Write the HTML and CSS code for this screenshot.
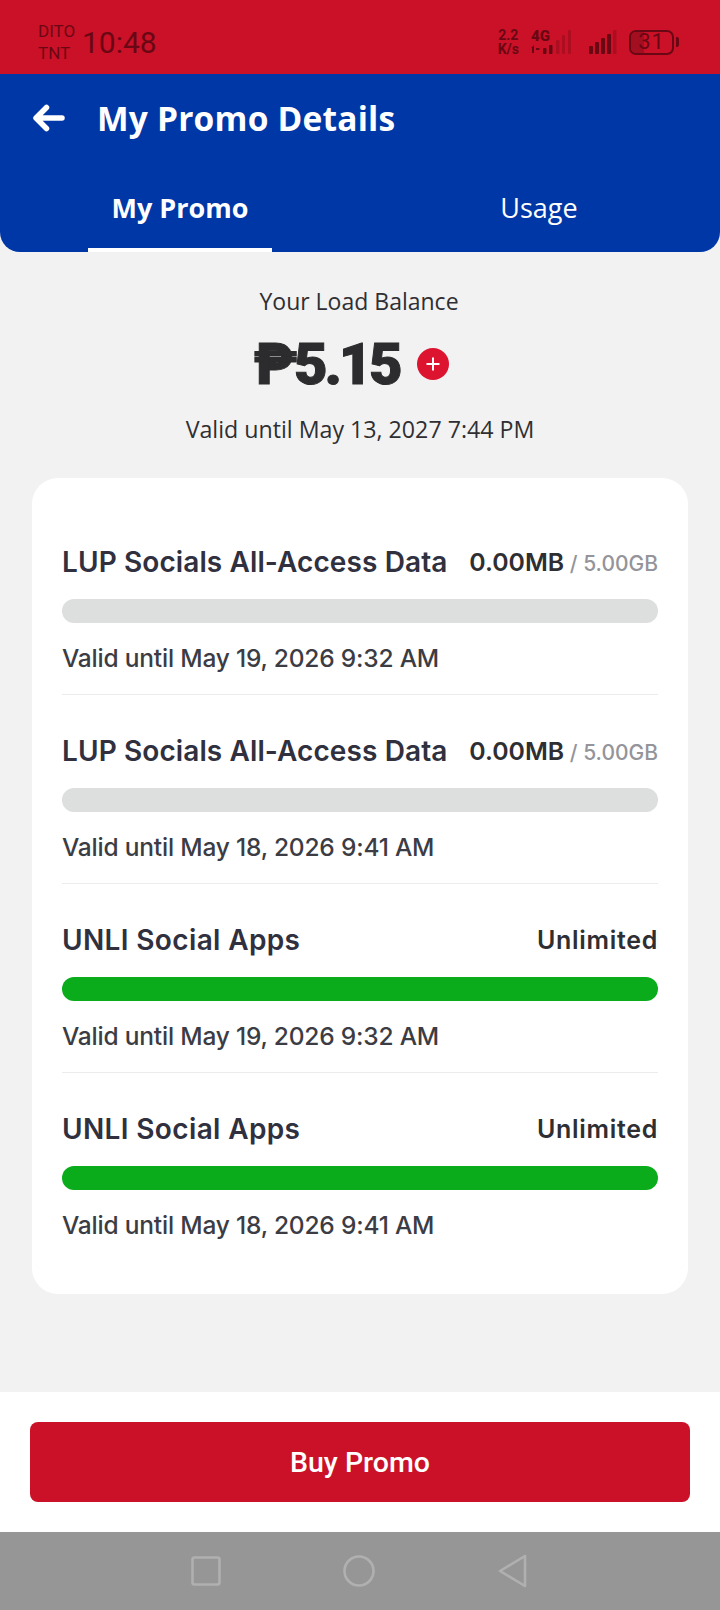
FILE: index.html
```html
<!DOCTYPE html>
<html lang="en">
<head>
<meta charset="utf-8">
<title>My Promo Details</title>
<link rel="stylesheet" href="styles.css">
</head>
<body>
<div class="screen">
  <div class="status">
    <div class="carrier"><span>DITO</span><span>TNT</span></div>
    <div class="clock">10:48</div>
    <div class="status-right">
      <div class="speed"><span>2.2</span><span>K/s</span></div>
      <div class="net">
        <span class="net-label">4G</span>
        <svg class="sig1" width="42" height="14" viewBox="0 0 42 14"><g fill="#6a0714"><path d="M0 8l3-3v8H1V8zM5 8h3l1 1-1 1H5z"/><rect x="12" y="8" width="3.5" height="6" rx="1"/><rect x="18" y="5" width="3.5" height="9" rx="1"/></g></svg>
        <svg class="sig1b" width="18" height="24" viewBox="0 0 18 24"><g fill="#6a0714" opacity=".3"><rect x="1" y="10" width="3.5" height="14" rx="1"/><rect x="7" y="5" width="3" height="19" rx="1"/><rect x="13" y="0" width="3" height="24" rx="1"/></g></svg>
      </div>
      <svg class="sig2" width="28" height="24" viewBox="0 0 28 24"><g fill="#6a0714"><rect x="0" y="16" width="4" height="8" rx="1"/><rect x="6" y="12" width="4" height="12" rx="1"/><rect x="12" y="8" width="4" height="16" rx="1"/><rect x="18" y="4" width="4" height="20" rx="1"/></g><rect x="24" y="0" width="3.5" height="24" rx="1" fill="#6a0714" opacity=".3"/></svg>
      <div class="battery"><div class="batt-body"><span class="batt-fill"></span><span class="batt-num">31</span></div><span class="batt-tip"></span></div>
    </div>
  </div>
  <header class="header">
    <div class="title-row">
      <svg class="back" width="32" height="28" viewBox="0 0 32 28"><path d="M13.5 3.5L3 14l10.5 10.5M4 14h25" fill="none" stroke="#fff" stroke-width="5.5" stroke-linecap="round" stroke-linejoin="round"/></svg>
      <h1>My Promo Details</h1>
    </div>
    <nav class="tabs">
      <div class="tab active">My Promo</div>
      <div class="tab">Usage</div>
    </nav>
  </header>
  <main class="content">
    <section class="balance">
      <div class="bal-label">Your Load Balance</div>
      <div class="bal-row">
        <span class="amount">₱5.15</span>
        <svg class="plus" width="32" height="32" viewBox="0 0 32 32"><circle cx="16" cy="16" r="16" fill="#dc1430"/><path d="M16 9.5v13M9.5 16h13" stroke="#fff" stroke-width="2"/></svg>
      </div>
      <div class="bal-valid">Valid until May 13, 2027 7:44 PM</div>
    </section>
    <section class="card">
      <article class="item">
        <div class="item-head"><span class="name">LUP Socials All-Access Data</span><span class="qty">0.00MB<small> / 5.00GB</small></span></div>
        <div class="bar"></div>
        <div class="until">Valid until May 19, 2026 9:32 AM</div>
      </article>
      <article class="item">
        <div class="item-head"><span class="name">LUP Socials All-Access Data</span><span class="qty">0.00MB<small> / 5.00GB</small></span></div>
        <div class="bar"></div>
        <div class="until">Valid until May 18, 2026 9:41 AM</div>
      </article>
      <article class="item">
        <div class="item-head"><span class="name unli">UNLI Social Apps</span><span class="qty unl">Unlimited</span></div>
        <div class="bar full"></div>
        <div class="until">Valid until May 19, 2026 9:32 AM</div>
      </article>
      <article class="item">
        <div class="item-head"><span class="name unli">UNLI Social Apps</span><span class="qty unl">Unlimited</span></div>
        <div class="bar full"></div>
        <div class="until">Valid until May 18, 2026 9:41 AM</div>
      </article>
    </section>
  </main>
  <div class="footer"><button class="buy">Buy Promo</button></div>
  <div class="navbar">
    <svg width="30" height="30" viewBox="0 0 30 30"><rect x="1.5" y="1.5" width="27" height="27" rx="2" fill="none" stroke="#b0b0b0" stroke-width="2.6"/></svg>
    <svg width="32" height="32" viewBox="0 0 32 32"><circle cx="16" cy="16" r="14.5" fill="none" stroke="#b0b0b0" stroke-width="2.6"/></svg>
    <svg width="29" height="34" viewBox="0 0 29 34"><path d="M27 2v30L2 17z" fill="none" stroke="#b0b0b0" stroke-width="2.6" stroke-linejoin="round"/></svg>
  </div>
</div>
</body>
</html>
```

FILE: styles.css
```css
* { box-sizing: border-box; margin: 0; padding: 0; }
html, body { width: 720px; height: 1610px; overflow: hidden; }
body { background: #f2f2f2; font-family: "Open Sans", "Noto Sans", sans-serif; color: #2f2f33; }
.screen { width: 720px; height: 1610px; display: flex; flex-direction: column; }

.status { height: 74px; flex: none; background: #cb1127; display: flex; align-items: center; color: #6a0714; padding: 10px 41px 0 38px; }
.carrier { display: flex; flex-direction: column; font-family: "Roboto", sans-serif; font-size: 17px; line-height: 22px; width: 44px; }
.clock { font-family: "Roboto", sans-serif; font-size: 30px; }
.status-right { margin-left: auto; display: flex; align-items: center; }
.speed { display: flex; flex-direction: column; align-items: center; font-family: "Roboto", sans-serif; font-weight: 700; font-size: 14px; line-height: 14px; margin-right: 12px; }
.net { position: relative; width: 42px; height: 24px; margin-right: 16px; }
.net-label { position: absolute; left: 0; top: -1px; font-family: "Roboto", sans-serif; font-weight: 900; font-size: 15px; line-height: 14px; }
.sig1 { position: absolute; left: 0; bottom: 0; }
.sig1b { position: absolute; right: 0; bottom: 0; }
.sig2 { margin-right: 12px; }
.battery { display: flex; align-items: center; }
.batt-body { position: relative; width: 45px; height: 25px; border: 2.5px solid #6a0714; border-radius: 7px; display: flex; align-items: center; justify-content: center; overflow: hidden; }
.batt-fill { position: absolute; left: 0; top: 0; bottom: 0; width: 31%; background: #a30f20; }
.batt-num { position: relative; font-family: "Roboto", sans-serif; font-size: 22px; line-height: 20px; letter-spacing: 1px; }
.batt-tip { width: 3px; height: 10px; background: #6a0714; border-radius: 0 2px 2px 0; margin-left: 2px; }

.header { height: 178px; flex: none; background: #0037a6; border-radius: 0 0 20px 20px; display: flex; flex-direction: column; color: #fff; }
.title-row { height: 88px; display: flex; align-items: center; padding-left: 33px; }
.back { margin-right: 32px; }
h1 { font-size: 33.5px; font-weight: 700; line-height: 40px; letter-spacing: 0.2px; }
.tabs { display: flex; padding: 0 88px; margin-top: auto; justify-content: space-between; }
.tab { width: 184px; height: 90px; display: flex; align-items: center; justify-content: center; font-size: 27px; padding-top: 4px; border-bottom: 4px solid transparent; }
.tab.active { font-weight: 700; border-bottom-color: #fff; }
.tab:last-child { margin-right: 1px; }

.content { flex: 1; display: flex; flex-direction: column; }
.balance { display: flex; flex-direction: column; align-items: center; padding-top: 34px; }
.bal-label { font-size: 23px; line-height: 30px; margin-right: 2px; }
.bal-row { display: flex; align-items: center; margin-top: 16px; height: 64px; gap: 18px; margin-right: 17px; }
.amount { font-family: "Roboto", sans-serif; font-size: 58px; font-weight: 900; line-height: 64px; color: #2c2c2e; letter-spacing: -3.3px; -webkit-text-stroke: 1px #2c2c2e; }
.bal-valid { font-size: 23.2px; line-height: 30px; margin-top: 18px; }

.card { margin: 34px 32px 0; background: #fff; border-radius: 26px; padding: 28px 30px 0; height: 816px; }
.item { height: 189px; padding-top: 36px; border-bottom: 1px solid #ececec; display: flex; flex-direction: column; }
.item:last-child { border-bottom: none; }
.item-head { display: flex; justify-content: space-between; align-items: center; height: 40px; }
.name { font-family: "Inter", sans-serif; font-size: 28px; font-weight: 600; color: #30303f; letter-spacing: 0.1px; }
.name.unli { letter-spacing: 0.36px; }
.qty { font-family: "Inter", sans-serif; font-size: 24.8px; font-weight: 600; color: #2e2e33; }
.qty small { font-size: 21px; font-weight: 500; color: #94949a; }
.qty.unl { font-size: 25px; letter-spacing: 0.7px; }
.bar { height: 24px; margin-top: 17px; background: #dcdfde; border-radius: 12px; }
.bar.full { background: #0aac1c; }
.until { font-family: "Inter", sans-serif; font-size: 24.5px; font-weight: 500; color: #3c3c44; line-height: 34px; margin-top: 18px; letter-spacing: -0.2px; }

.footer { height: 140px; flex: none; background: #fff; padding: 30px; }
.buy { width: 100%; height: 80px; border: none; border-radius: 8px; background: #cb1127; color: #fff; font-family: "Roboto", sans-serif; font-size: 28.5px; font-weight: 500; display: block; }

.navbar { height: 78px; flex: none; background: #969696; display: flex; align-items: center; justify-content: center; gap: 122.5px; padding-right: 3px; }
```
